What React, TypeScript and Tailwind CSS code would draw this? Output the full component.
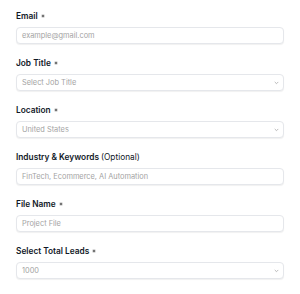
import React from "react";

function Chevron() {
  return (
    <svg width="5" height="4" viewBox="0 0 5 4" fill="none" className="shrink-0">
      <path d="M1 1.2l1.5 1.5 1.5-1.5" stroke="#a8a8a8" strokeWidth="0.8" strokeLinecap="round" strokeLinejoin="round" />
    </svg>
  );
}

function Field({
  label,
  optional,
  placeholder,
  select,
}: {
  label: string;
  optional?: boolean;
  placeholder: string;
  select?: boolean;
}) {
  return (
    <div className="flex flex-col">
      <div className="flex items-center h-[10px] text-[8.3px] leading-[10px] text-[#111827]">
        <span className="font-semibold">{label}</span>
        {optional ? (
          <span className="font-normal ml-[2px]">(Optional)</span>
        ) : (
          <span className="ml-[4px] w-[2px] h-[2px] rounded-full bg-[#555] ring-1 ring-[#d4d4d4]" />
        )}
      </div>
      <div className="mt-[6px] h-[17px] rounded-[4px] border border-[#e5e7eb] bg-white shadow-[0_1px_1px_rgba(0,0,0,0.06)] flex items-center justify-between pl-[5px] pr-[4px]">
        <span className="text-[7.4px] leading-[8px] text-[#a3a3a3]">{placeholder}</span>
        {select ? <Chevron /> : null}
      </div>
    </div>
  );
}

export default function App() {
  return (
    <div
      className="w-[300px] h-[294px] bg-white px-4 pt-[11px] flex flex-col gap-[14px]"
      style={{ fontFamily: "Inter, 'Noto Sans', sans-serif" }}
    >
      <Field label="Email" placeholder="example@gmail.com" />
      <Field label="Job Title" placeholder="Select Job Title" select />
      <Field label="Location" placeholder="United States" select />
      <Field label="Industry & Keywords" optional placeholder="FinTech, Ecommerce, AI Automation" />
      <Field label="File Name" placeholder="Project File" />
      <Field label="Select Total Leads" placeholder="1000" select />
    </div>
  );
}
